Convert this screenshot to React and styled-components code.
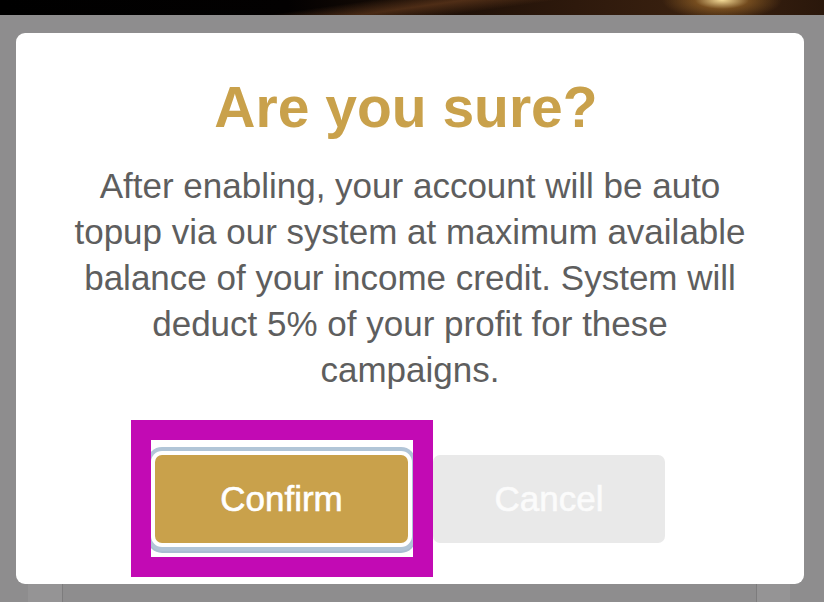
import React from 'react';
import styled, { createGlobalStyle } from 'styled-components';

const GlobalStyle = createGlobalStyle`
  html, body {
    margin: 0;
    padding: 0;
    background: #8e8d8e;
    overflow: hidden;
  }
  * { box-sizing: border-box; }
`;

const Screen = styled.div`
  width: 824px;
  height: 602px;
  display: flex;
  flex-direction: column;
  background: #8e8d8e;
  font-family: "Liberation Sans", Arial, sans-serif;
  overflow: hidden;
`;

const Banner = styled.div`
  height: 15px;
  flex: none;
  background:
    radial-gradient(ellipse 60px 20px at 722px 0px, rgba(255, 230, 160, 0.95), rgba(190, 130, 50, 0.45) 45%, transparent 100%),
    linear-gradient(172deg, transparent 40%, rgba(120, 70, 35, 0.55) 50%, transparent 60%),
    linear-gradient(90deg, #000 0%, #030101 35%, #1c0f07 52%, #2e190c 70%, #3b2210 86%, #2a170b 100%);
`;

const Stage = styled.div`
  flex: 1;
  display: flex;
  flex-direction: column;
  padding-top: 18px;
`;

const Modal = styled.div`
  margin: 0 20px 0 16px;
  width: 788px;
  background: #fff;
  border-radius: 9px;
  padding: 42px 40px 41px;
  display: flex;
  flex-direction: column;
  align-items: center;
`;

const Title = styled.h2`
  margin: 0;
  font-size: 57px;
  line-height: 1.15;
  font-weight: 700;
  color: #c9a14b;
  text-align: center;
  transform: translateX(-4px);
`;

const Message = styled.p`
  margin: 22px 0 0;
  max-width: 700px;
  font-size: 35px;
  line-height: 46px;
  color: #5e5e5e;
  text-align: center;
`;

const Actions = styled.div`
  margin-top: 62px;
  display: flex;
  justify-content: center;
  gap: 25px;
`;

const Spot = styled.div`
  position: relative;
`;

const Button = styled.button`
  width: ${(p) => p.$w}px;
  height: 88px;
  border: none;
  border-radius: 7px;
  font-family: inherit;
  font-size: 35px;
  display: flex;
  align-items: center;
  justify-content: center;
  -webkit-text-stroke: 0.6px currentColor;
  background: ${(p) => (p.$primary ? '#c9a14b' : '#e9e9e9')};
  color: ${(p) => (p.$primary ? '#fff' : '#fbfbfb')};
  box-shadow: ${(p) =>
    p.$focused ? '0 0 0 4px #fff, 0 0 0 8px #b1c5d7, 0 2px 0 8px #a9bed1' : 'none'};
`;

const Highlight = styled.span`
  position: absolute;
  top: -35px;
  left: -24px;
  right: -25px;
  bottom: -34px;
  border: 20px solid #c20ab4;
  pointer-events: none;
`;

const Peek = styled.div`
  flex: 1;
  display: flex;
  padding: 0 34px 0 28px;
`;

const Tab = styled.div`
  width: ${(p) => p.$w}px;
  background: #959495;
  border-left: ${(p) => (p.$side === 'right' ? '1px solid #7d7c7d' : 'none')};
  border-right: ${(p) => (p.$side === 'left' ? '1px solid #7d7c7d' : 'none')};
`;

const Gap = styled.div`
  flex: 1;
`;

export default function App() {
  return (
    <Screen>
      <GlobalStyle />
      <Banner />
      <Stage>
        <Modal>
          <Title>Are you sure?</Title>
          <Message>
            After enabling, your account will be auto topup via our system at maximum
            available balance of your income credit. System will deduct 5% of your
            profit for these campaigns.
          </Message>
          <Actions>
            <Spot>
              <Button $primary $focused $w={253}>Confirm</Button>
              <Highlight />
            </Spot>
            <Button $w={232}>Cancel</Button>
          </Actions>
        </Modal>
        <Peek>
          <Tab $w={35} $side="left" />
          <Gap />
          <Tab $w={34} $side="right" />
        </Peek>
      </Stage>
    </Screen>
  );
}
